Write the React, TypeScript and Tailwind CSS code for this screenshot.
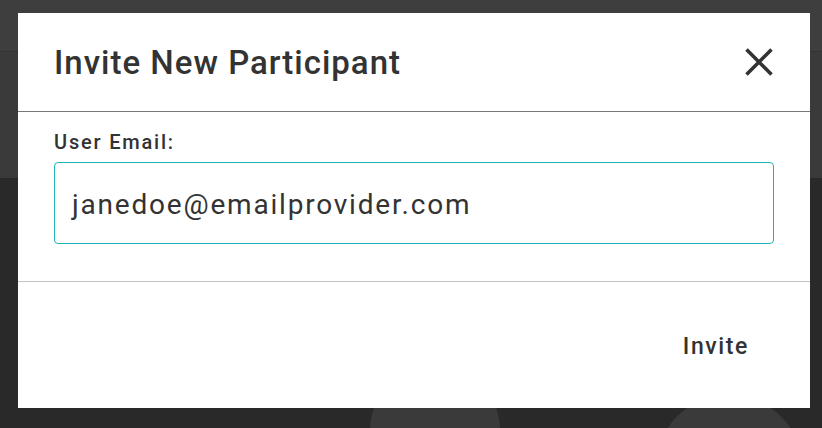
const App = () => {
  return (
    <div className="relative h-[428px] w-[822px] overflow-hidden bg-[#292929] font-['Roboto',sans-serif]">
      {/* page behind the dialog */}
      <div className="h-[52px] border-b border-[#333333] bg-[#3e3e3e]" />
      <div className="h-[126px] bg-[#3a3a3a]" />
      <div className="absolute left-[370px] top-[365px] h-[130px] w-[130px] rounded-full bg-[#3a3a3a]" />
      <div className="absolute left-[655px] top-[395px] h-[148px] w-[148px] rounded-full bg-[#3a3a3a]" />

      <div className="absolute left-[18px] top-[13px] flex h-[395px] w-[792px] flex-col bg-white text-[#333333]">
        <div className="flex h-[99px] items-center justify-between border-b border-[#777777] pl-[36px] pr-[37px]">
          <h2 className="text-[33px] font-medium leading-none tracking-[1px]">Invite New Participant</h2>
          <button className="flex h-[28px] w-[28px] items-center justify-center">
            <svg width="28" height="28" viewBox="0 0 28 28" fill="none" stroke="#333333" strokeWidth="3.6">
              <path d="M1.5 1.5L26.5 26.5M26.5 1.5L1.5 26.5" />
            </svg>
          </button>
        </div>

        <div className="border-b border-[#c4c4c4] px-[36px] pb-[37px] pt-[18px]">
          <label className="block text-[20px] font-medium leading-[24px] tracking-[1.8px]">User Email:</label>
          <div className="mt-[8px] flex h-[82px] items-center rounded-[4px] border border-[#1fb5b5] pl-[17px] pt-[4px]">
            <span className="text-[28px] leading-none tracking-[1.8px]">janedoe@emailprovider.com</span>
          </div>
        </div>

        <div className="flex flex-1 items-center justify-end pr-[61px] pt-[4px]">
          <button className="text-[23px] font-medium leading-[28px] tracking-[1.6px]">Invite</button>
        </div>
      </div>
    </div>
  )
}

export default App
